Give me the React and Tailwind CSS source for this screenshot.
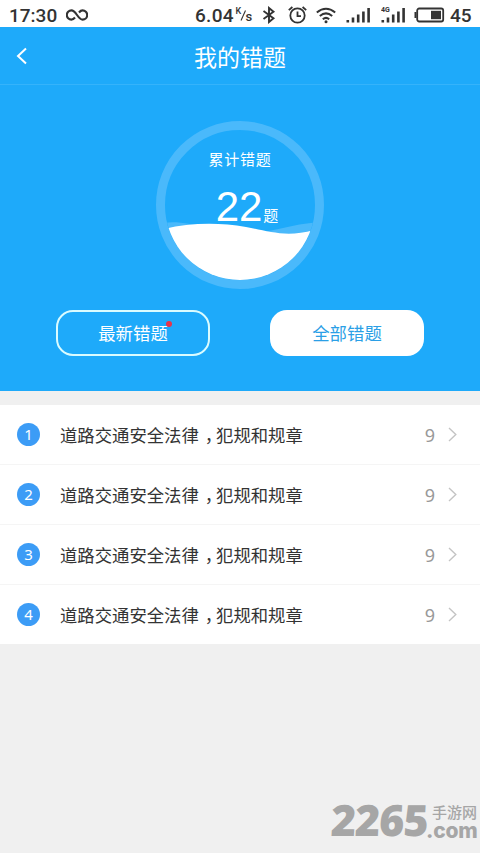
import React from "react";

const questions = [
  { id: 1, title: "道路交通安全法律", sub: "犯规和规章", count: 9 },
  { id: 2, title: "道路交通安全法律", sub: "犯规和规章", count: 9 },
  { id: 3, title: "道路交通安全法律", sub: "犯规和规章", count: 9 },
  { id: 4, title: "道路交通安全法律", sub: "犯规和规章", count: 9 },
];

const SignalBars = ({ label }) => (
  <svg className="h-[20px] w-[26px]" viewBox="0 0 26 20" fill="#333">
    {label && (
      <text x="0" y="6.5" fontSize="7" fontWeight="bold" fontFamily="Roboto, sans-serif">
        {label}
      </text>
    )}
    <rect x="0.5" y="15" width="2.6" height="2.5" />
    <rect x="5.7" y="12.5" width="2.6" height="5" />
    <rect x="10.9" y="9.5" width="2.6" height="8" />
    <rect x="16.1" y="6.5" width="2.6" height="11" />
    <rect x="21.3" y="3" width="2.6" height="14.5" />
  </svg>
);

const StatusBar = () => (
  <div className="h-[27px] bg-white flex items-center pl-[9px] pt-[3px] text-[#333] font-['Roboto',sans-serif] font-medium text-[19px] leading-none">
    <span className="w-[57px]">17:30</span>
    <svg className="w-[22px] h-[12px]" viewBox="0 0 22 12" fill="none" stroke="#333" strokeWidth="2.1">
      <path d="M9 8.5C7.8 10 6.7 10.6 5.4 10.6A4.5 4.5 0 0 1 5.4 1.4C10.2 1.4 11.8 10.6 16.6 10.6A4.5 4.5 0 0 0 16.6 1.4C15.3 1.4 14.2 2 13 3.5" />
    </svg>
    <span className="ml-[107px] w-[40px] tracking-[0.3px]">6.04</span>
    <svg className="w-[19px] h-[20px]" viewBox="0 0 19 20" fill="#333" fontFamily="Roboto, sans-serif">
      <text x="0.5" y="8.5" fontSize="9">K</text>
      <path d="M6 15.5L10.5 5.5" stroke="#333" strokeWidth="1.1" />
      <text x="10.5" y="16" fontSize="13">s</text>
    </svg>
    <svg className="ml-[8px] w-[14px] h-[18px]" viewBox="0 0 14 18" fill="none" stroke="#333" strokeWidth="1.9">
      <path d="M1.5 5L11.5 12.2L7 16V2L11.5 5.8L1.5 13" />
    </svg>
    <svg className="ml-[12px] w-[19px] h-[18px]" viewBox="0 0 19 18" fill="none" stroke="#333" strokeWidth="1.8">
      <circle cx="9.5" cy="9.5" r="7.2" />
      <path d="M9.5 5.5V10.2H13" />
      <path d="M0.8 4.2L4.4 1M18.2 4.2L14.6 1" />
    </svg>
    <svg className="ml-[9px] w-[20px] h-[17px]" viewBox="0 0 20 17" fill="none" stroke="#333" strokeWidth="2">
      <path d="M0.8 5.5Q10 -2 19.2 5.5" />
      <path d="M3.8 9Q10 3.8 16.2 9" />
      <path d="M6.8 12.2Q10 9.6 13.2 12.2" />
      <circle cx="10" cy="14.8" r="1.5" fill="#333" stroke="none" />
    </svg>
    <div className="ml-[10px] flex gap-[9px]">
      <SignalBars />
      <SignalBars label="4G" />
    </div>
    <svg className="ml-[7px] w-[31px] h-[16px]" viewBox="0 0 31 16" fill="none">
      <rect x="3.2" y="1.5" width="26" height="13" rx="2" stroke="#333" strokeWidth="1.8" />
      <rect x="0.5" y="5" width="2" height="6" fill="#333" />
      <rect x="17" y="3.8" width="10" height="8.4" fill="#333" />
    </svg>
    <span className="ml-[5px]">45</span>
  </div>
);

const WaterGauge = () => (
  <div className="relative w-[168px] h-[168px]">
    <svg className="w-full h-full" viewBox="0 0 168 168">
      <defs>
        <clipPath id="gauge">
          <circle cx="84" cy="84" r="75" />
        </clipPath>
      </defs>
      <circle cx="84" cy="84" r="79.5" fill="none" stroke="#4ab9fb" strokeWidth="9" />
      <g clipPath="url(#gauge)">
        <path d="M8 102C30 98 60 112 100 112C125 109 140 102 168 101V168H8Z" fill="#4ab9fb" />
        <path d="M8 108C32 102 62 101 90 106C112 110 130 117 158 109V168H8Z" fill="#fff" />
      </g>
    </svg>
    <div className="absolute inset-0 flex flex-col items-center text-white">
      <span className="mt-[27px] text-[15px] leading-[21px] tracking-[0.8px]">累计错题</span>
      <div className="mt-[13px] ml-[14px] flex items-baseline">
        <span className="font-['Liberation_Sans',sans-serif] text-[42px] leading-[50px]">22</span>
        <span className="ml-[1px] text-[15px] leading-none">题</span>
      </div>
    </div>
  </div>
);

const App = () => {
  return (
    <div className="w-[480px] h-[853px] bg-[#f0f0f0] flex flex-col overflow-hidden font-['Noto_Sans_CJK_SC',sans-serif]">
      <StatusBar />

      <div className="h-[364px] bg-[#1eaafa] flex flex-col">
        <header className="h-[58px] shrink-0 border-b border-[#35b3fb] grid grid-cols-[60px_1fr_60px] items-center text-white">
          <svg className="ml-[16px] w-[12px] h-[18px]" viewBox="0 0 12 18" fill="none" stroke="#fff" strokeWidth="2">
            <path d="M10 1.5L2 9L10 16.5" />
          </svg>
          <h1 className="pt-[2px] text-center text-[23px] leading-none">我的错题</h1>
        </header>

        <div className="flex justify-center pt-[36px]">
          <WaterGauge />
        </div>

        <div className="flex justify-between px-[56px] mt-[21px]">
          <button className="w-[154px] h-[46px] rounded-[17px] border-2 border-[#d9fbff] text-[17.4px] text-white leading-none">
            <span className="relative">
              最新错题
              <i className="absolute -right-[4px] top-[1px] w-[6px] h-[6px] rounded-full bg-[#e8334a]" />
            </span>
          </button>
          <button className="w-[154px] h-[46px] rounded-[17px] bg-white text-[17.4px] text-[#2b9fe6] leading-none">
            全部错题
          </button>
        </div>
      </div>

      <ul className="mt-[14px] bg-white h-[239px]">
        {questions.map((q) => (
          <li
            key={q.id}
            className="h-[60px] flex items-center pl-[17px] pr-[23px] border-b border-[#f5f5f5] last:h-[59px] last:border-b-0"
          >
            <span className="w-[23px] h-[23px] rounded-full bg-[#3c9cf6] text-white text-[15px] leading-none flex items-center justify-center font-['Noto_Sans',sans-serif]">
              {q.id}
            </span>
            <span className="ml-[20px] flex-1 flex text-[17.35px] leading-none text-[#333]">
              <span>{q.title}</span>
              <span className="ml-[6px] mr-[2.6px] [font-feature-settings:'halt']">，</span>
              <span>{q.sub}</span>
            </span>
            <span className="text-[18px] leading-none text-[#999] font-['Noto_Sans',sans-serif]">
              {q.count}
            </span>
            <svg className="ml-[13px] w-[9px] h-[15px]" viewBox="0 0 9 15" fill="none" stroke="#c4c4c4" strokeWidth="1.4">
              <path d="M1 1L7.8 7.5L1 14" />
            </svg>
          </li>
        ))}
      </ul>

      <div className="mt-auto mb-[13px] self-end flex items-end text-[#a6a6a6]">
        <span className="w-[95px] font-['Open_Sans',sans-serif] font-extrabold text-[43px] leading-[40px] tracking-[-1px] whitespace-nowrap -skew-x-3">
          2265
        </span>
        <div className="flex flex-col w-[54px]">
          <span className="ml-[6px] text-[15px] leading-[15px] font-medium whitespace-nowrap">手游网</span>
          <span className="mt-[2px] font-['Inter',sans-serif] font-extrabold text-[21px] leading-[19px] tracking-[-0.2px] whitespace-nowrap">
            .com
          </span>
        </div>
      </div>
    </div>
  );
};

export default App;
